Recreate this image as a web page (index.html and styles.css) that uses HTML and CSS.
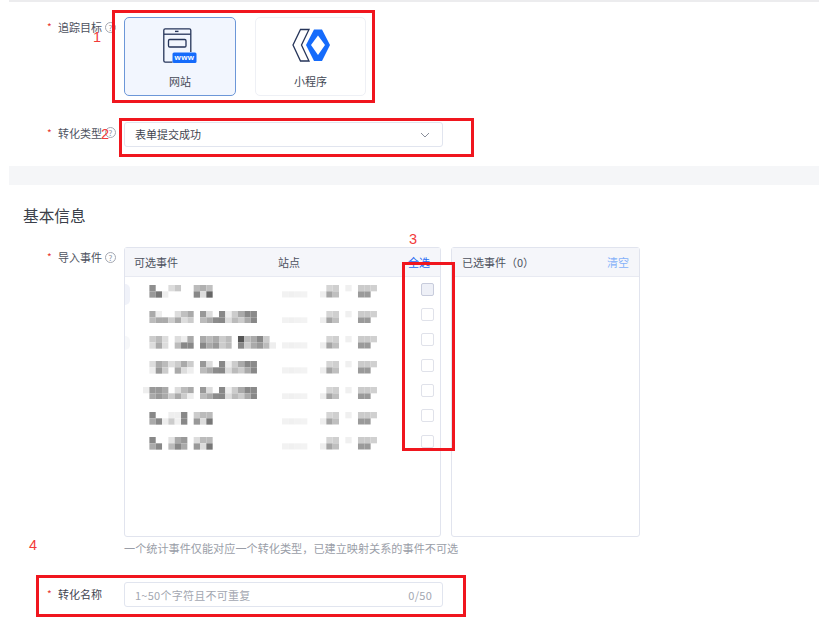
FILE: index.html
```html
<!DOCTYPE html>
<html lang="zh-CN">
<head>
<meta charset="utf-8">
<title>转化</title>
<link rel="stylesheet" href="styles.css">
</head>
<body>
<svg class="defs" width="0" height="0">
  <defs>
    <symbol id="site" viewBox="0 0 15 2">
      <rect x="0" y="1" fill="#f2f2f2"/><rect x="1" y="1" fill="#f0f0f0"/><rect x="2" y="1" fill="#f2f2f2"/><rect x="3" y="1" fill="#f3f3f3"/>
      <rect x="6" y="1" fill="#eee"/><rect x="7" y="0" fill="#d5d5d5"/><rect x="8" y="0" fill="#cfcfcf"/><rect x="7" y="1" fill="#a5a5a5"/><rect x="8" y="1" fill="#bfbfbf"/>
      <rect x="10" y="0" fill="#f0f0f0"/><rect x="12" y="0" fill="#cbcbcb"/><rect x="13" y="0" fill="#cbcbcb"/><rect x="14" y="0" fill="#d0d0d0"/>
      <rect x="12" y="1" fill="#9a9a9a"/><rect x="13" y="1" fill="#9a9a9a"/>
    </symbol>
    <symbol id="tail" viewBox="0 0 21 2">
      <rect x="9" y="0" fill="#999"/><rect x="10" y="0" fill="#ddd"/><rect x="12" y="0" fill="#888"/><rect x="13" y="0" fill="#eee"/><rect x="14" y="0" fill="#ccc"/><rect x="15" y="0" fill="#aaa"/><rect x="16" y="0" fill="#888"/><rect x="17" y="0" fill="#8a8a8a"/>
      <rect x="9" y="1" fill="#bbb"/><rect x="10" y="1" fill="#aaa"/><rect x="11" y="1" fill="#8c8c8c"/><rect x="12" y="1" fill="#888"/><rect x="13" y="1" fill="#ddd"/><rect x="14" y="1" fill="#bbb"/><rect x="15" y="1" fill="#ccc"/><rect x="16" y="1" fill="#aaa"/><rect x="17" y="1" fill="#888"/>
    </symbol>
  </defs>
</svg>
<div class="page">
  <div class="top-rule"></div>

  <section class="form-top">
    <div class="row row-target">
      <div class="label"><span class="star">*</span>追踪目标<span class="help">?</span></div>
      <div class="cards">
        <div class="card card-on">
          <svg class="card-icon" width="36" height="36" viewBox="0 0 36 36">
            <path class="navy" d="M10.5 34.2H3.2a1.4 1.4 0 0 1-1.4-1.4V2.2A1.4 1.4 0 0 1 3.2 0.8h24.2a1.4 1.4 0 0 1 1.4 1.4V24"/>
            <path class="navy" d="M2 6.2H28.6"/>
            <path class="navy thick" d="M13 3.4h3.5"/>
            <rect class="navy" x="6.5" y="11.5" rx="1.2"/>
            <rect class="blue-fill" x="10.5" y="24.5" rx="1.5"/>
            <text class="www" x="22.5" y="32.4">www</text>
          </svg>
          <span class="card-name">网站</span>
        </div>
        <div class="card">
          <svg class="card-icon" width="38" height="36" viewBox="0 0 38 36">
            <path class="navy" d="M1 17 8.5 1.5H17L9.5 17 17 33H8.5Z"/>
            <path class="blue-fill" fill-rule="evenodd" d="M14 17 22 1.5H30L38 17 30 33H22ZM26 7.5 19 17 26 27 33 17Z"/>
          </svg>
          <span class="card-name">小程序</span>
        </div>
      </div>
    </div>
    <div class="row row-type">
      <div class="label"><span class="star">*</span>转化类型<span class="help">?</span></div>
      <div class="field select">
        <span>表单提交成功</span>
        <svg width="10" height="6" viewBox="0 0 10 6"><path class="chev" d="M1 1 5 5 9 1"/></svg>
      </div>
    </div>
  </section>

  <div class="band"></div>

  <section class="form-basic">
    <h2 class="title">基本信息</h2>
    <div class="row">
      <div class="label"><span class="star">*</span>导入事件<span class="help">?</span></div>
      <div class="picker">
        <div class="panel panel-left">
          <div class="panel-head">
            <span class="col-name">可选事件</span>
            <span class="col-site">站点</span>
            <span class="link">全选</span>
          </div>
          <div class="list">
            <div class="item item-ghost">
              <svg class="mosaic" viewBox="0 0 21 2">
                <rect x="1" y="0" fill="#8f8f8f"/><rect x="4" y="0" fill="#dcdcdc"/><rect x="5" y="0" fill="#c8c8c8"/><rect x="8" y="0" fill="#bbb"/><rect x="9" y="0" fill="#b0b0b0"/><rect x="10" y="0" fill="#c0c0c0"/>
                <rect x="1" y="1" fill="#999"/><rect x="2" y="1" fill="#777"/><rect x="3" y="1" fill="#eee"/><rect x="8" y="1" fill="#888"/><rect x="9" y="1" fill="#ddd"/><rect x="10" y="1" fill="#666"/>
              </svg>
              <svg class="site"><use href="#site"/></svg>
              <span class="check check-on"></span>
            </div>
            <div class="item">
              <svg class="mosaic" viewBox="0 0 21 2">
                <rect x="1" y="0" fill="#aaa"/><rect x="2" y="0" fill="#eee"/><rect x="5" y="0" fill="#ddd"/><rect x="6" y="0" fill="#c0c0c0"/><rect x="7" y="0" fill="#aaa"/>
                <rect x="1" y="1" fill="#bbb"/><rect x="2" y="1" fill="#aaa"/><rect x="3" y="1" fill="#aaa"/><rect x="4" y="1" fill="#ccc"/><rect x="5" y="1" fill="#aaa"/><rect x="6" y="1" fill="#ddd"/><rect x="7" y="1" fill="#ccc"/>
                <use href="#tail" width="21" height="2"/>
              </svg>
              <svg class="site"><use href="#site"/></svg>
              <span class="check"></span>
            </div>
            <div class="item item-ghost2">
              <svg class="mosaic" viewBox="0 0 21 2">
                <rect x="1" y="0" fill="#ccc"/><rect x="2" y="0" fill="#bbb"/><rect x="3" y="0" fill="#ddd"/><rect x="5" y="0" fill="#ddd"/><rect x="6" y="0" fill="#eee"/><rect x="7" y="0" fill="#aaa"/><rect x="9" y="0" fill="#aaa"/><rect x="10" y="0" fill="#bbb"/><rect x="11" y="0" fill="#aaa"/><rect x="12" y="0" fill="#ccc"/><rect x="13" y="0" fill="#bbb"/><rect x="15" y="0" fill="#555"/><rect x="16" y="0" fill="#bbb"/><rect x="17" y="0" fill="#aaa"/><rect x="18" y="0" fill="#888"/><rect x="19" y="0" fill="#ccc"/>
                <rect x="1" y="1" fill="#ddd"/><rect x="2" y="1" fill="#aaa"/><rect x="3" y="1" fill="#ddd"/><rect x="5" y="1" fill="#bbb"/><rect x="6" y="1" fill="#888"/><rect x="7" y="1" fill="#888"/><rect x="9" y="1" fill="#888"/><rect x="10" y="1" fill="#aaa"/><rect x="11" y="1" fill="#999"/><rect x="12" y="1" fill="#ccc"/><rect x="13" y="1" fill="#bbb"/><rect x="15" y="1" fill="#888"/><rect x="16" y="1" fill="#ccc"/><rect x="17" y="1" fill="#aaa"/><rect x="18" y="1" fill="#999"/><rect x="19" y="1" fill="#bbb"/><rect x="20" y="1" fill="#eee"/>
              </svg>
              <svg class="site"><use href="#site"/></svg>
              <span class="check"></span>
            </div>
            <div class="item">
              <svg class="mosaic" viewBox="0 0 21 2">
                <rect x="1" y="0" fill="#ddd"/><rect x="2" y="0" fill="#aaa"/><rect x="3" y="0" fill="#bbb"/><rect x="4" y="0" fill="#ddd"/><rect x="5" y="0" fill="#ccc"/><rect x="6" y="0" fill="#aaa"/><rect x="7" y="0" fill="#ccc"/>
                <rect x="1" y="1" fill="#eee"/><rect x="2" y="1" fill="#999"/><rect x="3" y="1" fill="#ccc"/><rect x="5" y="1" fill="#aaa"/><rect x="6" y="1" fill="#ddd"/><rect x="7" y="1" fill="#eee"/>
                <use href="#tail" width="21" height="2"/>
              </svg>
              <svg class="site"><use href="#site"/></svg>
              <span class="check"></span>
            </div>
            <div class="item">
              <svg class="mosaic" viewBox="0 0 21 2">
                <rect x="0" y="0" fill="#eee"/><rect x="1" y="0" fill="#999"/><rect x="2" y="0" fill="#999"/><rect x="3" y="0" fill="#aaa"/><rect x="5" y="0" fill="#ddd"/><rect x="6" y="0" fill="#bbb"/><rect x="7" y="0" fill="#aaa"/>
                <rect x="1" y="1" fill="#aaa"/><rect x="2" y="1" fill="#999"/><rect x="3" y="1" fill="#aaa"/><rect x="4" y="1" fill="#ccc"/><rect x="5" y="1" fill="#aaa"/><rect x="6" y="1" fill="#ccc"/><rect x="7" y="1" fill="#eee"/>
                <use href="#tail" width="21" height="2"/>
              </svg>
              <svg class="site"><use href="#site"/></svg>
              <span class="check"></span>
            </div>
            <div class="item">
              <svg class="mosaic" viewBox="0 0 21 2">
                <rect x="1" y="0" fill="#888"/><rect x="4" y="0" fill="#eee"/><rect x="5" y="0" fill="#eee"/><rect x="6" y="0" fill="#888"/><rect x="8" y="0" fill="#ccc"/><rect x="9" y="0" fill="#bbb"/><rect x="10" y="0" fill="#bbb"/>
                <rect x="1" y="1" fill="#aaa"/><rect x="2" y="1" fill="#888"/><rect x="3" y="1" fill="#eee"/><rect x="4" y="1" fill="#ccc"/><rect x="5" y="1" fill="#f0f0f0"/><rect x="6" y="1" fill="#888"/><rect x="8" y="1" fill="#999"/><rect x="9" y="1" fill="#ddd"/><rect x="10" y="1" fill="#777"/>
              </svg>
              <svg class="site"><use href="#site"/></svg>
              <span class="check"></span>
            </div>
            <div class="item">
              <svg class="mosaic" viewBox="0 0 21 2">
                <rect x="1" y="0" fill="#888"/><rect x="4" y="0" fill="#e4e4e4"/><rect x="5" y="0" fill="#aaa"/><rect x="6" y="0" fill="#999"/><rect x="8" y="0" fill="#ddd"/><rect x="9" y="0" fill="#bbb"/><rect x="10" y="0" fill="#bbb"/>
                <rect x="1" y="1" fill="#aaa"/><rect x="2" y="1" fill="#888"/><rect x="4" y="1" fill="#bbb"/><rect x="5" y="1" fill="#888"/><rect x="6" y="1" fill="#aaa"/><rect x="8" y="1" fill="#999"/><rect x="9" y="1" fill="#ddd"/><rect x="10" y="1" fill="#777"/>
              </svg>
              <svg class="site"><use href="#site"/></svg>
              <span class="check"></span>
            </div>
          </div>
        </div>
        <div class="panel panel-right">
          <div class="panel-head head-right">
            <span>已选事件（0）</span>
            <span class="link link-soft">清空</span>
          </div>
        </div>
      </div>
    </div>
    <p class="note">一个统计事件仅能对应一个转化类型，已建立映射关系的事件不可选</p>
    <div class="row row-name">
      <div class="label label-strong"><span class="star">*</span>转化名称</div>
      <div class="field input">
        <span class="hint">1~50个字符且不可重复</span>
        <span class="hint">0/50</span>
      </div>
    </div>
  </section>

  <div class="mark box1"></div>
  <div class="mark box2"></div>
  <div class="mark box3"></div>
  <div class="mark box4"></div>
  <span class="num n1">1</span>
  <span class="num n2">2</span>
  <span class="num n3">3</span>
  <span class="num n4">4</span>
</div>
</body>
</html>
```
FILE: styles.css
```css
* { box-sizing: border-box; }
html, body { margin: 0; padding: 0; background: #fff; }
body {
  width: 827px;
  height: 623px;
  overflow: hidden;
  font-family: "Noto Sans CJK SC", "Noto Sans", sans-serif;
  font-size: 11px;
  color: #454a56;
}
.defs { position: absolute; }
svg rect { width: 1px; height: 1px; }
.page { position: relative; width: 827px; height: 623px; padding: 0 8px 0 9px; }
.top-rule { height: 2px; background: #ececee; }

.form-top { padding-top: 15px; height: 164px; }
.row { display: flex; }
.row-type { margin-top: 26px; }
.label {
  width: 115px;
  padding-left: 38px;
  display: flex;
  align-items: center;
  height: 20px;
  line-height: 20px;
  color: #4d525e;
  flex: none;
}
.row-type .label { height: 21px; }
.star { color: #e8352e; width: 11px; font-size: 10px; flex: none; }
.help {
  width: 11px;
  height: 11px;
  margin-left: 3px;
  border: 1px solid #a4a8b2;
  border-radius: 50%;
  color: #8e929c;
  font-size: 8px;
  line-height: 9px;
  text-align: center;
  flex: none;
}
.cards { display: flex; gap: 19px; }
.card {
  width: 112px;
  height: 79px;
  border: 1px solid #eef0f5;
  border-radius: 5px;
  background: #fff;
  display: flex;
  flex-direction: column;
  align-items: center;
  padding-top: 10px;
}
.card + .card { width: 111px; }
.card-on { background: #f2f6fe; border-color: #6c97d8; }
.card-icon { display: block; flex: none; }
.card-name { margin-top: 9px; line-height: 16px; }
.navy { fill: none; stroke: #26355a; stroke-width: 1.3; }
.navy.thick { stroke-width: 1.4; }
.card svg rect.navy { width: 17.5px; height: 7.5px; }
.card svg rect.blue-fill { width: 24px; height: 10.5px; }
.blue-fill { fill: #156bfb; }
.www { fill: #fff; font: bold 8px "Liberation Sans", sans-serif; text-anchor: middle; letter-spacing: .4px; }
.card + .card .navy { fill: #fff; }

.field {
  width: 319px;
  height: 25px;
  border: 1px solid #e1e5ef;
  border-radius: 3px;
  background: #fff;
  padding: 0 10px;
  display: flex;
  align-items: center;
  justify-content: space-between;
}
.select { color: #3f4450; padding-right: 12px; line-height: 21px; }
.select span { margin-top: -1px; }
.chev { fill: none; stroke: #8a8f9b; stroke-width: 1; }
.hint { color: #a3a7b1; letter-spacing: .25px; }

.band { height: 19px; background: #f5f6f8; }

.form-basic { padding-top: 20px; }
.title {
  margin: 0 0 20px 14px;
  font-size: 15.7px;
  font-weight: 400;
  line-height: 22px;
  color: #3b3f4a;
}
.picker { display: flex; gap: 10px; }
.panel { height: 290px; border: 1px solid #e1e4ee; border-radius: 3px; background: #fff; }
.panel-left { width: 317px; }
.panel-right { width: 189px; }
.panel-head {
  height: 29px;
  background: #f5f6fa;
  border-bottom: 1px solid #e8eaf2;
  display: flex;
  align-items: center;
  color: #4d525e;
  padding: 0 10px;
  line-height: 16px;
}
.panel-left .panel-head { padding-left: 9px; }
.col-name { width: 144px; }
.col-site { flex: 1; }
.head-right { justify-content: space-between; }
.link { color: #2468f2; }
.link-soft { color: #86b2f9; }
.list { padding-top: 2px; }
.item {
  position: relative;
  height: 25.33px;
  display: flex;
  align-items: center;
  padding-left: 18px;
}
.item-ghost::before, .item-ghost2::before {
  content: "";
  position: absolute;
  left: 0;
  top: 5px;
  width: 5px;
  height: 21px;
  background: #f0f2f9;
  border-radius: 0 5px 5px 0;
}
.item-ghost2::before { background: #f7f8fa; height: 14px; top: 6px; }
.mosaic { width: 133px; height: 12.66px; flex: none; }
.site { width: 95px; height: 12.66px; margin-left: 6px; flex: none; }
.check {
  width: 13px;
  height: 13px;
  margin: 0 0 5px 44px;
  border: 1px solid #e0e2ea;
  border-radius: 2px;
  background: #fff;
  flex: none;
}
.check-on { background: #eef0f7; border-color: #c8ccdc; }
.note { margin: 4px 0 0 115px; font-size: 11.15px; line-height: 14px; color: #9a9ea8; white-space: nowrap; }
.row-name { margin-top: 27px; }
.row-name .label { height: 23px; }
.label-strong { color: #3f4450; }

.mark { position: absolute; border: 3px solid #f0161e; }
.box1 { left: 112px; top: 10px; width: 263px; height: 93px; }
.box2 { left: 119px; top: 118px; width: 355px; height: 39px; }
.box3 { left: 402px; top: 262px; width: 53px; height: 189px; }
.box4 { left: 36px; top: 575px; width: 430px; height: 42px; }
.num {
  position: absolute;
  font-family: "Liberation Sans", sans-serif;
  font-size: 14.5px;
  line-height: 16px;
  color: #f23a3a;
}
.n1 { left: 93px; top: 29px; }
.n2 { left: 101px; top: 126px; }
.n3 { left: 409px; top: 231px; }
.n4 { left: 29px; top: 537px; }
```
